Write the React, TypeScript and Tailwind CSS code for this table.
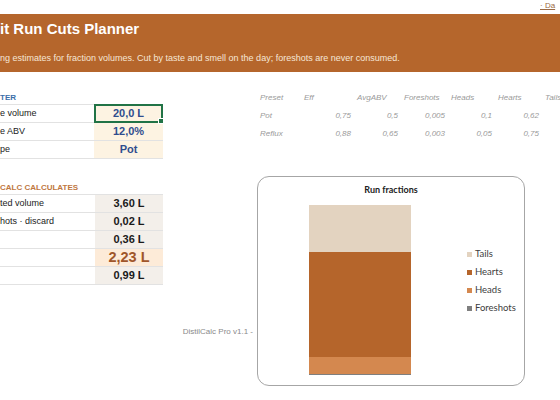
import React from "react"

const params = [
  { label: "e volume", value: "20,0 L", active: true },
  { label: "e ABV", value: "12,0%" },
  { label: "pe", value: "Pot" },
]

const calcs = [
  { label: "ted volume", value: "3,60 L" },
  { label: "hots · discard", value: "0,02 L" },
  { label: "", value: "0,36 L" },
  { label: "", value: "2,23 L", hero: true },
  { label: "", value: "0,99 L" },
]

const presets = [
  ["Pot", "0,75", "0,5", "0,005", "0,1", "0,62"],
  ["Reflux", "0,88", "0,65", "0,003", "0,05", "0,75"],
]

const fractions = [
  { name: "Tails", litres: 0.99, color: "#e3d3c0" },
  { name: "Hearts", litres: 2.23, color: "#b5652b" },
  { name: "Heads", litres: 0.36, color: "#d4884f" },
  { name: "Foreshots", litres: 0.02, color: "#7f7f7f" },
]

const BAR_HEIGHT = 170

export default function App() {
  const total = fractions.reduce((s, f) => s + f.litres, 0)

  return (
    <div className="w-[560px] h-[400px] overflow-hidden bg-white font-['Liberation_Sans',Arial,sans-serif] text-[#222]">
      {/* top link */}
      <div className="h-[14px] flex items-start">
        <span className="ml-[540px] mt-[1px] text-[8px] leading-[10px] text-[#9a6a45] underline whitespace-nowrap">· Da</span>
      </div>

      {/* banner */}
      <div className="h-[58px] bg-[#b5662c] text-white overflow-hidden whitespace-nowrap">
        <div className="pt-[6px] text-[15px] leading-[18px] font-bold">it Run Cuts Planner</div>
        <div className="mt-[14px] text-[9px] leading-[12px] text-[#f6e6d6]">
          ng estimates for fraction volumes. Cut by taste and smell on the day; foreshots are never consumed.
        </div>
      </div>

      <div className="flex">
        {/* left column */}
        <div className="w-[257px] shrink-0 flex flex-col">
          <div className="mt-[20px] h-[12px] text-[8px] leading-[12px] font-bold text-[#3b6ea8]">TER</div>
          <div className="w-[163px] border-t border-[#e2e2e2]">
            {params.map((r) => (
              <div key={r.value} className="flex h-[18px] border-b border-[#e2e2e2]">
                <div className="w-[94px] text-[9px] leading-[17px] whitespace-nowrap">{r.label}</div>
                <div
                  className={
                    r.active
                      ? "relative flex-1 bg-[#fdf3e2] border-2 border-[#217346] -my-[1px] flex items-center justify-center text-[11px] font-bold text-[#2f4d8e]"
                      : "flex-1 bg-[#fdf3e2] flex items-center justify-center text-[11px] font-bold text-[#2f4d8e]"
                  }
                >
                  {r.value}
                  {r.active && <span className="absolute -right-[3px] -bottom-[3px] w-[4px] h-[4px] bg-[#217346] border border-white box-content" />}
                </div>
              </div>
            ))}
          </div>

          <div className="mt-[23px] h-[12px] text-[8px] leading-[12px] font-bold text-[#c0773f] whitespace-nowrap">CALC CALCULATES</div>
          <div className="w-[163px] border-t border-[#e2e2e2]">
            {calcs.map((r) => (
              <div key={r.value} className="flex h-[18px] border-b border-[#e2e2e2]">
                <div className="w-[95px] text-[9px] leading-[17px] whitespace-nowrap">{r.label}</div>
                <div
                  className={
                    r.hero
                      ? "flex-1 bg-[#fdebd8] flex items-center justify-center text-[14.5px] font-bold text-[#a0562a]"
                      : "flex-1 bg-[#f3efea] flex items-center justify-center text-[11px] font-bold text-[#1a1a1a]"
                  }
                >
                  {r.value}
                </div>
              </div>
            ))}
          </div>

          <div className="mt-[41px] pr-[4px] text-right text-[8px] leading-[12px] text-[#8a8a8a] whitespace-nowrap">DistilCalc Pro v1.1 -</div>
        </div>

        {/* right column */}
        <div className="flex flex-col">
          <div className="pt-[17px] italic text-[8px] text-[#9a9a9a] whitespace-nowrap">
            <div className="grid grid-cols-[47px_47px_47px_47px_47px_47px_47px] h-[18px] items-center">
              {["Preset", "Eff", "AvgABV", "Foreshots", "Heads", "Hearts", "Tails"].map((h, i) => (
                <span key={h} className={i === 0 ? "pl-[3px]" : i === 1 ? "pl-[0px]" : "pl-[6px]"}>{h}</span>
              ))}
            </div>
            {presets.map((row) => (
              <div key={row[0]} className="grid grid-cols-[47px_47px_47px_47px_47px_47px_47px] h-[18px] items-center">
                {row.map((c, i) => (
                  <span key={i} className={i === 0 ? "pl-[3px]" : "text-right"}>{c}</span>
                ))}
              </div>
            ))}
          </div>

          {/* chart */}
          <div className="mt-[33px] w-[268px] h-[210px] border border-[#a6a6a6] rounded-[12px] flex flex-col font-['Lato',sans-serif]">
            <div className="pt-[7px] text-center text-[9px] leading-[11px] font-bold text-[#222]">Run fractions</div>
            <div className="flex mt-[10px]">
              <div className="ml-[51px] w-[102px] flex flex-col" style={{ height: BAR_HEIGHT }}>
                {fractions.map((f) => (
                  <div key={f.name} style={{ height: (f.litres / total) * BAR_HEIGHT, backgroundColor: f.color }} />
                ))}
              </div>
              <div className="ml-[56px] mt-[43px] flex flex-col gap-[6px]">
                {fractions.map((f) => (
                  <div key={f.name} className="flex items-center gap-[3px] h-[12px]">
                    <span className="w-[5px] h-[5px]" style={{ backgroundColor: f.color }} />
                    <span className="text-[9.5px] leading-[12px] text-[#404040]">{f.name}</span>
                  </div>
                ))}
              </div>
            </div>
          </div>
        </div>
      </div>
    </div>
  )
}
